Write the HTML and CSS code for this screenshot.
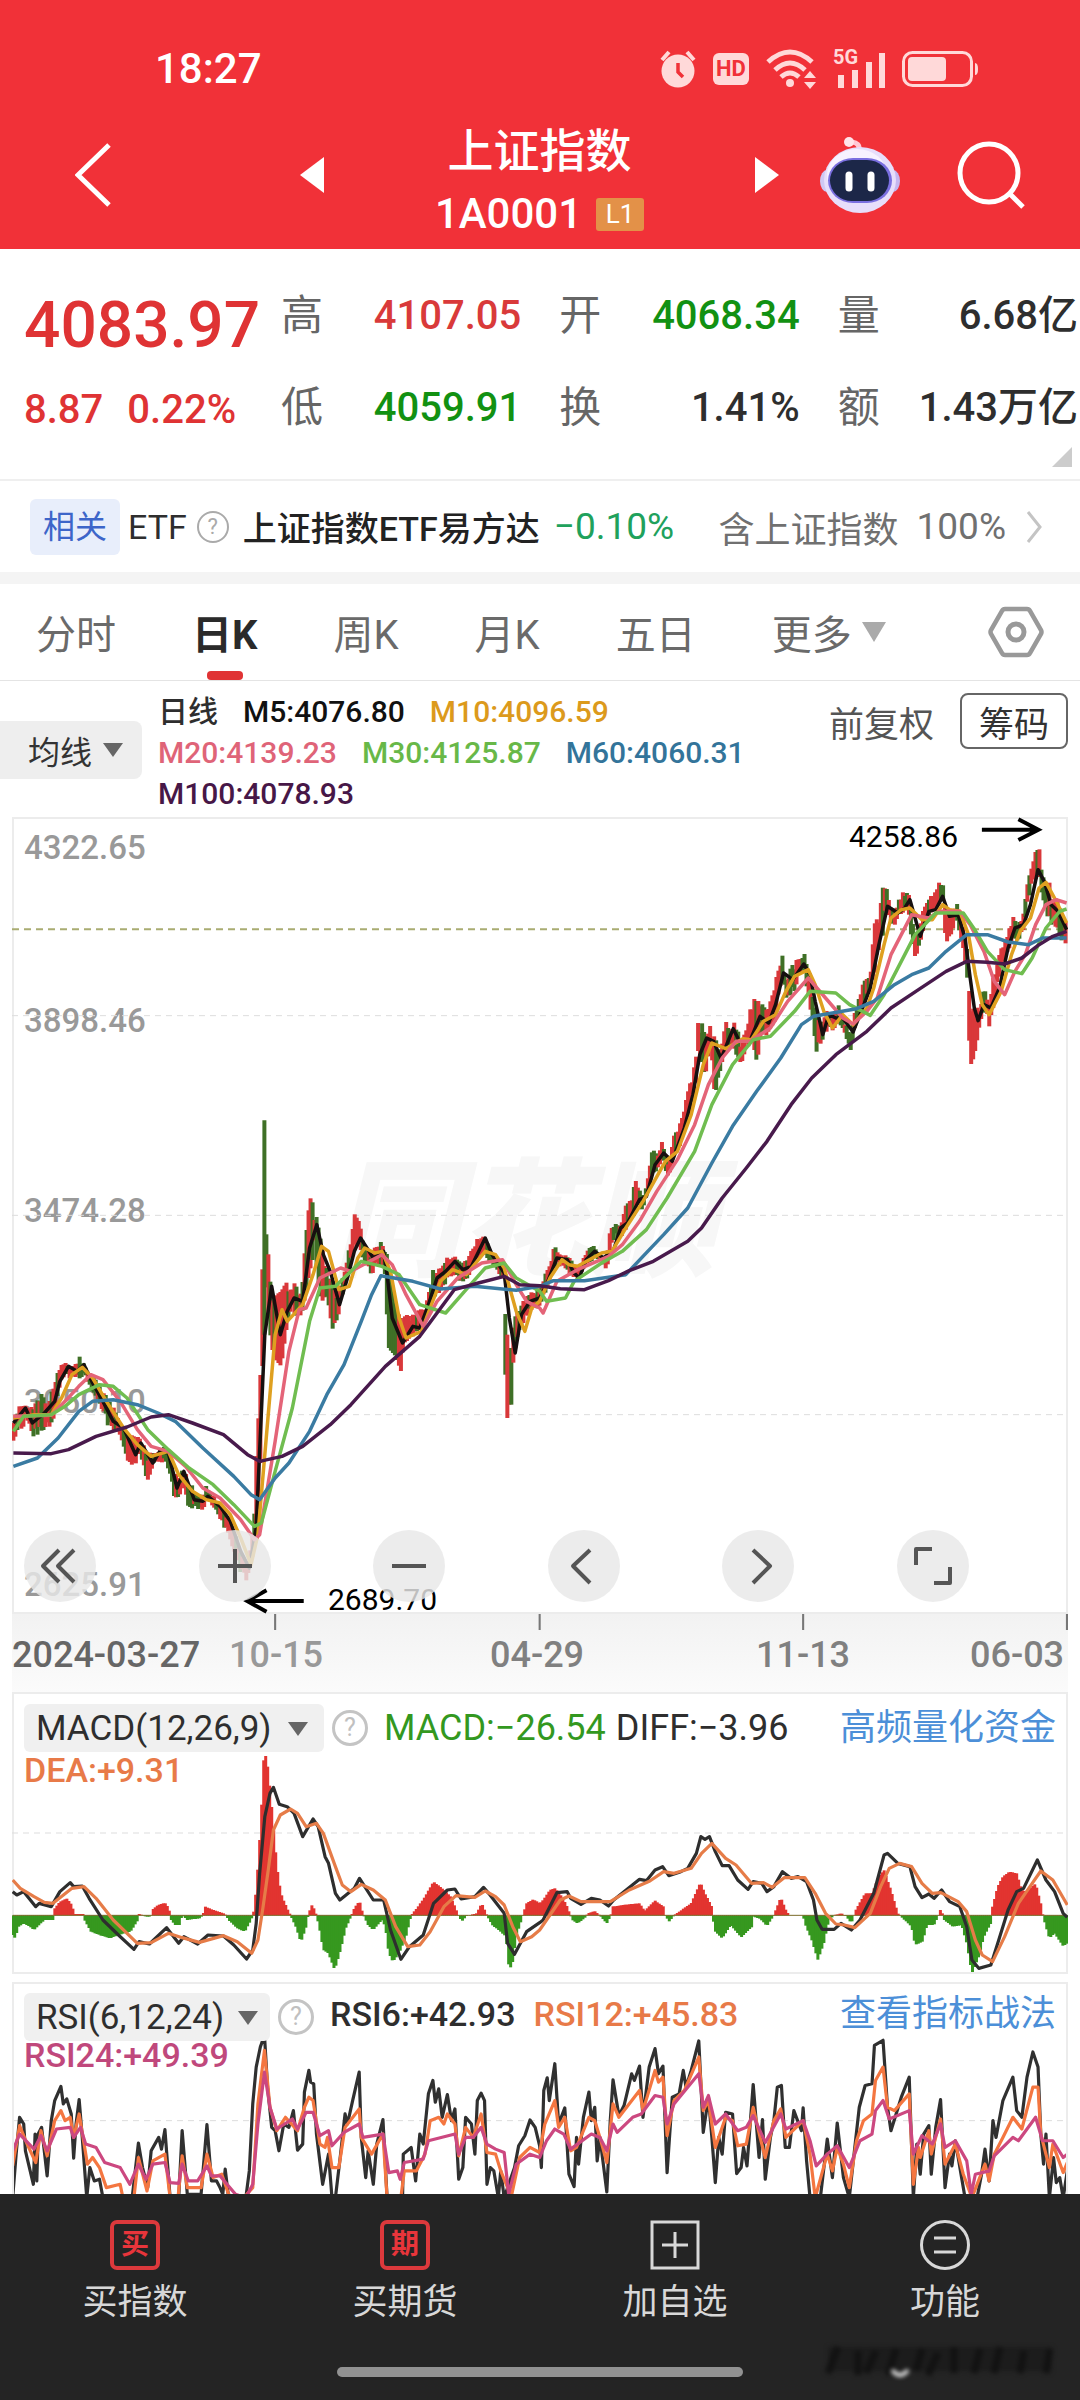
FILE: index.html
```html
<!DOCTYPE html>
<html lang="zh-CN">
<head>
<meta charset="utf-8">
<meta name="viewport" content="width=device-width, initial-scale=1">
<title>上证指数 1A0001</title>
<link rel="stylesheet" href="styles.css">
</head>
<body>
<header class="top">
  <div class="status">
    <span class="clock">18:27</span>
    <div class="status-icons">
      <svg width="36" height="40" viewBox="0 0 36 40"><circle cx="18" cy="22" r="16.500"/><path d="M2 11 9 3M34 11 27 3" class="ln" stroke-width="4"/><path d="M18 14v9l5 5" fill="none" stroke="#f13138" stroke-width="3.500"/></svg>
      <span class="hd">HD</span>
      <svg width="50" height="40" viewBox="0 0 50 40"><g class="ln" stroke-width="5"><path d="M2 13Q24-7 46 13"/><path d="M9 21Q24 7 39 21"/><path d="M15 28Q24 20 33 28"/></g><circle cx="24" cy="34" r="4"/><path d="M44 22l6 7H38zM44 40l6-7H38z"/></svg>
      <span class="net"><small>5G</small><svg width="52" height="40" viewBox="0 0 52 40"><path d="M5 26h6v13H5zM19 21h6v18h-6zM33 13h6v26h-6zM46 4h6v35h-6z"/></svg></span>
      <svg width="76" height="36" viewBox="0 0 76 36"><rect x="1.500" y="1.500" width="68" height="33" rx="9" fill="none" stroke="#ffd9d9" stroke-width="3"/><rect x="6" y="6" width="38" height="24" rx="4"/><path d="M73 12q3 0 3 6t-3 6z"/></svg>
    </div>
  </div>
  <nav class="titlebar">
    <div class="side-left">
      <button aria-label="返回"><svg width="36" height="64" viewBox="0 0 36 64"><path d="M34 2 3 32 34 62" fill="none" stroke="#fff" stroke-width="5"/></svg></button>
      <button aria-label="上一个"><svg width="24" height="36" viewBox="0 0 24 36"><path d="M24 0v36L0 18z" fill="#fff"/></svg></button>
    </div>
    <div class="title">
      <h1>上证指数</h1>
      <p>1A0001<span class="l1">L1</span></p>
    </div>
    <div class="side-right">
      <button aria-label="下一个"><svg width="24" height="36" viewBox="0 0 24 36"><path d="M0 0v36l24-18z" fill="#fff"/></svg></button>
      <button class="robot" aria-label="助手"><svg width="82" height="76" viewBox="0 0 82 76"><path d="M40 13q1-7-7-8" fill="none" stroke="#ffc9d6" stroke-width="5"/><circle cx="30" cy="5" r="5" fill="#ffe4ea"/><ellipse cx="8" cy="44" rx="7" ry="11" fill="#cfc8f4"/><ellipse cx="74" cy="44" rx="7" ry="11" fill="#c4b6f0"/><ellipse cx="41" cy="43" rx="36" ry="33" fill="#e7defb"/><ellipse cx="38" cy="38" rx="30" ry="26" fill="#f7f2ff"/><rect x="9" y="21" width="64" height="45" rx="25" fill="#7a6fe0"/><rect x="11" y="23" width="59" height="41" rx="22" fill="#1c2748"/><path d="M30 38v13M52 38v13" stroke="#fff" stroke-width="7" stroke-linecap="round"/></svg></button>
      <button aria-label="搜索"><svg width="68" height="68" viewBox="0 0 68 68"><circle cx="32" cy="32" r="29" fill="none" stroke="#fff" stroke-width="5"/><path d="M53 53 66 66" stroke="#fff" stroke-width="5"/></svg></button>
    </div>
  </nav>
</header>

<section class="quote">
  <div class="price">
    <strong>4083.97</strong>
    <p><span>8.87</span><span>0.22%</span></p>
  </div>
  <dl class="facts">
    <div><dt>高</dt><dd class="up">4107.05</dd></div>
    <div><dt>开</dt><dd class="down">4068.34</dd></div>
    <div><dt>量</dt><dd>6.68亿</dd></div>
    <div><dt>低</dt><dd class="down">4059.91</dd></div>
    <div><dt>换</dt><dd>1.41%</dd></div>
    <div><dt>额</dt><dd>1.43万亿</dd></div>
  </dl>
  <i class="corner"></i>
</section>

<a class="etf" href="#etf">
  <span class="tag">相关</span><span class="etf-word">ETF</span><span class="help small">?</span>
  <span class="etf-name">上证指数ETF易方达</span><span class="etf-change">−0.10%</span>
  <span class="etf-share">含上证指数</span><span class="etf-pct">100%</span>
  <svg width="16" height="32" viewBox="0 0 16 32"><path d="M2 1 14 16 2 31" fill="none" stroke="#c4c4c4" stroke-width="3"/></svg>
</a>

<nav class="tabs">
  <button>分时</button><button class="on">日K</button><button>周K</button><button>月K</button><button>五日</button><button class="more">更多<i class="caret pale"></i></button>
  <button class="gear" aria-label="设置"><svg width="56" height="52" viewBox="0 0 56 52"><path d="M17 3h22q2 0 3 2l11 19q1 2 0 4L42 47q-1 2-3 2H17q-2 0-3-2L3 28q-1-2 0-4L14 5q1-2 3-2z" fill="none" stroke="#999" stroke-width="4.500"/><circle cx="28" cy="26" r="8" fill="none" stroke="#999" stroke-width="5"/></svg></button>
</nav>

<section class="legend">
  <button class="ma-select">均线<i class="caret"></i></button>
  <p class="ma-values">
    <span>日线</span><span class="m5">M5:4076.80</span><span class="m10">M10:4096.59</span><br>
    <span class="m20">M20:4139.23</span><span class="m30">M30:4125.87</span><span class="m60">M60:4060.31</span><br>
    <span class="m100">M100:4078.93</span>
  </p>
  <button class="adjust">前复权</button>
  <button class="chips">筹码</button>
</section>

<section class="panel kline">
  <span class="mark">同花顺</span>
  <span class="scale s1">4322.65</span><span class="scale s2">3898.46</span><span class="scale s3">3474.28</span><span class="scale s4">3050.10</span><span class="scale s5">2625.91</span>
  <svg class="plot" id="kline" viewBox="36 47 3066 2391" preserveAspectRatio="none">
    <path class="grid" d="M36 643H3102M36 1242H3102M36 1840H3102"/>
    <path class="now" d="M36 384H3102"/>
    <path class="arrow" d="M2852 85H3016M2958 54 3016 85 2958 116M883 2399H719M775 2367 719 2399 775 2431"/>
  </svg>
  <span class="peak">4258.86</span><span class="trough">2689.70</span>
  <div class="controls">
    <button aria-label="最早"><svg viewBox="0 0 72 72"><path d="M35 20 19 36 35 52M50 20 34 36 50 52"/></svg></button>
    <button aria-label="放大"><svg viewBox="0 0 72 72"><path d="M19 36H53M36 19V53"/></svg></button>
    <button aria-label="缩小"><svg viewBox="0 0 72 72"><path d="M19 36H53"/></svg></button>
    <button aria-label="向左"><svg viewBox="0 0 72 72"><path d="M42 20 25 36 42 53"/></svg></button>
    <button aria-label="向右"><svg viewBox="0 0 72 72"><path d="M31 20 48 36 31 53"/></svg></button>
    <button aria-label="全屏"><svg viewBox="0 0 72 72"><path d="M35 19H19V35M53 37V53H37"/></svg></button>
  </div>
</section>
<div class="dates">
  <svg class="ticks" viewBox="36 0 3066 16" preserveAspectRatio="none"><path d="M800 0V16M1568 0V16M2333 0V16M3099 0V16"/></svg>
  <span class="first">2024-03-27</span><span class="faded">10-15</span><span>04-29</span><span>11-13</span><span>06-03</span>
</div>

<section class="panel macd">
  <svg class="plot" id="macd" viewBox="36 6 3066 846" preserveAspectRatio="none"><path class="grid" d="M36 429H3102"/></svg>
  <div class="head">
    <button class="pick">MACD(12,26,9)<i class="caret"></i></button><span class="help">?</span>
    <span class="green">MACD:−26.54</span><span>DIFF:−3.96</span>
    <a href="#flow">高频量化资金</a>
  </div>
  <p class="second orange">DEA:+9.31</p>
</section>

<section class="panel rsi">
  <svg class="plot" id="rsi" viewBox="36 -114 3066 633" preserveAspectRatio="none"><path class="grid" d="M36 300H3102"/></svg>
  <div class="head">
    <button class="pick">RSI(6,12,24)<i class="caret"></i></button><span class="help">?</span>
    <span class="rsi6">RSI6:+42.93</span><span class="orange">RSI12:+45.83</span>
    <a href="#guide">查看指标战法</a>
  </div>
  <p class="second pink">RSI24:+49.39</p>
</section>

<footer class="bottom">
  <nav>
    <button><span class="seal">买</span>买指数</button>
    <button><span class="seal">期</span>买期货</button>
    <button><svg width="50" height="50" viewBox="0 0 50 50"><path d="M2 2H48V48H2zM12 25H38M25 12V38"/></svg>加自选</button>
    <button><svg width="50" height="50" viewBox="0 0 50 50"><circle cx="25" cy="25" r="23.500"/><path d="M14 18H36M14 32H36"/></svg>功能</button>
  </nav>
  <i class="home"></i>
  <svg class="smudge" width="232" height="36" viewBox="0 0 232 36"><rect x="4" y="4" width="224" height="24" fill="#1c1c1c"/><g fill="none" stroke="#121212" stroke-width="7"><path d="M14 4 4 30M34 8V32M52 8 42 30M72 6 64 32M98 6 92 28M114 10 104 32M130 4V30M156 6 150 30M176 4 170 30M200 8 196 30M226 6 222 30"/></g><path d="M68 27q8 10 16 0" fill="none" stroke="#e4e4e4" stroke-width="4"/></svg>
</footer>
<script src="chart.js"></script>
</body>
</html>
```
FILE: styles.css
```css
* { box-sizing: border-box; margin: 0; padding: 0; }
body { background: #fff; color: #2e2e2e; font-family: Roboto, "Noto Sans CJK SC", sans-serif; overflow-x: hidden; }
button { border: 0; background: none; font: inherit; color: inherit; white-space: nowrap; }
a { color: inherit; text-decoration: none; }
svg { display: block; flex: none; }
i { display: block; flex: none; }

.top { background: #f13138; color: #fff; }
.status { display: flex; justify-content: space-between; align-items: center; padding: 44px 102px 0 155px; }
.clock { font-size: 42px; font-weight: 500; line-height: 50px; }
.status-icons { display: flex; align-items: center; gap: 17px; fill: #ffd9d9; color: #ffd9d9; }
.ln { fill: none; stroke: #ffd9d9; }
.hd { background: #ffd9d9; color: #f13138; border-radius: 6px; width: 36px; font: bold 22px/32px Roboto, sans-serif; text-align: center; }
.net { position: relative; }
.net small { position: absolute; left: 0; top: -4px; font: 700 20px/24px Roboto, sans-serif; }
.titlebar { display: flex; height: 155px; padding: 25px 0 8px; }
.titlebar button { display: block; }
.side-left, .side-right { display: flex; align-items: center; height: 112px; }
.side-left { flex: 0 0 324px; justify-content: space-between; padding-left: 75px; }
.side-right { flex: 0 0 325px; gap: 40px; }
.robot { padding-right: 16px; }
.title { flex: 1; text-align: center; }
.title h1 { font-size: 46px; font-weight: 500; line-height: 64px; }
.title p { display: flex; justify-content: center; align-items: center; gap: 14px; font-size: 42px; font-weight: 500; line-height: 62px; }
.l1 { background: #e39148; border-radius: 3px; width: 48px; font-size: 26px; font-weight: 400; line-height: 33px; }

.quote { position: relative; display: flex; height: 232px; padding: 21px 2px 0 24px; border-bottom: 2px solid #efefef; }
.price { flex: 0 0 257px; color: #df3334; font-weight: 500; }
.price strong { display: block; font-size: 64px; font-weight: 500; line-height: 112px; }
.price p { display: flex; gap: 24px; font-size: 40px; line-height: 56px; }
.facts { flex: 1; display: grid; grid-template-columns: repeat(3, 1fr); column-gap: 38px; align-content: start; }
.facts div { display: flex; justify-content: space-between; line-height: 92px; font-size: 40px; white-space: nowrap; }
.facts dt { color: #666; font-size: 42px; }
.facts dd { font-weight: 500; }
.up { color: #d93a3a; }
.down { color: #129112; }
.corner { position: absolute; right: 8px; bottom: 12px; border-left: 20px solid transparent; border-bottom: 20px solid #ccc; }

.etf { display: flex; align-items: center; height: 91px; padding: 0 38px 0 30px; font-size: 34px; white-space: nowrap; }
.tag { background: #e8eefb; color: #3d65c9; border-radius: 6px; width: 90px; line-height: 56px; text-align: center; font-size: 32px; margin-right: 8px; }
.help { flex: none; width: 36px; height: 36px; border: 3px solid #c4c4c4; border-radius: 50%; color: #c0c0c0; text-align: center; font-size: 25px; line-height: 30px; }
.help.small { width: 32px; height: 32px; border: 2px solid #aaa; color: #aaa; font-size: 22px; line-height: 28px; margin: 0 14px 0 10px; }
.etf-name { color: #222; font-weight: 500; }
.etf-change { color: #20a15c; font-size: 37px; margin-left: 14px; }
.etf-share { color: #707070; font-size: 36px; margin-left: auto; }
.etf-pct { color: #707070; font-size: 37px; margin: 0 20px 0 18px; }

.tabs { display: flex; align-items: center; gap: 76px; height: 109px; padding: 0 36px; border-top: 12px solid #f4f4f4; border-bottom: 1px solid #e4e4e4; font-size: 40px; color: #6a6a6a; }
.tabs button { height: 96px; }
.tabs .on { position: relative; color: #2a2a2a; font-weight: 700; }
.tabs .on::after { content: ""; position: absolute; left: 50%; bottom: 0; margin-left: -18px; width: 36px; height: 9px; border-radius: 4px; background: #e03334; }
.more { display: flex; align-items: center; gap: 10px; }
.tabs .gear { margin-left: auto; }
.caret { border: 10px solid transparent; border-top: 14px solid #666; border-bottom: 0; }
.caret.pale { border-width: 20px 12px 0; border-top-color: #aaa; }

.legend { display: flex; align-items: flex-start; padding: 10px 12px 0 0; height: 136px; }
.ma-select { display: flex; align-items: center; gap: 11px; width: 142px; height: 58px; margin-top: 30px; padding-left: 28px; background: #eee; border-radius: 0 8px 8px 0; font-size: 32px; color: #333; }
.ma-values { flex: 1; padding-left: 16px; font-size: 30px; font-weight: 500; line-height: 41px; white-space: nowrap; }
.ma-values span { margin-right: 25px; }
.m5 { color: #111; } .m10 { color: #dc9a1c; } .m20 { color: #df6478; } .m30 { color: #68b848; } .m60 { color: #33749a; } .m100 { color: #471747; }
.adjust { font-size: 35px; line-height: 70px; color: #555; margin-right: 26px; }
.chips { width: 108px; height: 56px; margin-top: 2px; border: 2px solid #666; border-radius: 8px; font-size: 35px; color: #333; }

.panel { position: relative; margin: 0 12px; border: 2px solid #ececec; }
.plot { position: absolute; inset: -2px; width: calc(100% + 4px); height: calc(100% + 4px); fill: none; }
.plot path { vector-effect: non-scaling-stroke; }
.plot .grid { stroke: #ddd; stroke-width: 1px; stroke-dasharray: 6px 5px; }
.plot .now { stroke: #a9ac72; stroke-width: 2px; stroke-dasharray: 7px 5px; }
.plot .arrow { stroke: #000; stroke-width: 4px; }
.plot .line { stroke-width: 3px; stroke-linejoin: round; }
.kline { height: 797px; }
.mark { position: absolute; left: 50%; top: 312px; margin-left: -208px; font: italic 900 128px/160px "Noto Sans CJK SC", sans-serif; color: #f7f7f7; white-space: nowrap; }
.scale { position: absolute; left: 10px; font-size: 33px; font-weight: 500; line-height: 40px; color: #999; }
.s1 { top: 9px; } .s2 { top: 182px; } .s3 { top: 372px; } .s4 { top: 563px; } .s5 { top: 746px; }
.peak, .trough { position: absolute; font-size: 30px; line-height: 36px; color: #000; }
.peak { right: 108px; top: 0; }
.trough { left: 314px; bottom: -6px; }
.controls { position: absolute; left: 10px; right: 97px; bottom: 10px; display: flex; justify-content: space-between; }
.controls button { width: 72px; height: 72px; border-radius: 50%; background: rgba(232, 232, 232, 0.82); }
.controls svg { fill: none; stroke: #555; stroke-width: 4px; stroke-linejoin: round; }

.dates { position: relative; margin: 0 12px; height: 78px; display: grid; grid-template-columns: 217fr 261fr 266fr 214fr 98fr; background: linear-gradient(#f2f2f2, #fbfbfb); font-size: 36px; font-weight: 500; line-height: 82px; color: #808080; white-space: nowrap; }
.first { color: #666; }
.faded { color: #999; }
.ticks { position: absolute; left: 0; top: 0; width: 100%; height: 16px; stroke: #777; stroke-width: 6px; }

.macd { height: 282px; margin-bottom: 8px; }
.rsi { height: 212px; border-bottom: 0; overflow: hidden; }
.rsi .plot { top: -2px; height: calc(100% + 2px); }
.head { position: relative; display: flex; align-items: center; padding: 9px 10px 0; font-size: 36px; line-height: 50px; white-space: nowrap; }
.pick { display: flex; align-items: center; justify-content: space-between; width: 300px; height: 48px; padding: 2px 16px 0 12px; border-radius: 6px; background: #f0f0f0; font-size: 35px; }
.head .help { margin: 0 16px 0 8px; line-height: 30px; }
.head span + span { margin-right: 10px; }
.head a { margin-left: auto; color: #4c8fd8; }
.rsi .pick { width: 246px; padding-right: 12px; }
.rsi .head { align-items: flex-start; font-size: 34px; font-weight: 500; line-height: 42px; }
.rsi .pick, .rsi .head a, .rsi .help { font-weight: 400; }
.rsi .head .help { margin-top: 6px; }
.rsi .head .rsi6 { margin-right: 18px; }
.rsi .head a { font-size: 36px; }
.second { position: relative; padding-left: 10px; font-size: 34px; font-weight: 500; line-height: 34px; }
.rsi .second { line-height: 28px; }
.green { color: #33981f; } .orange { color: #e87a48; } .pink { color: #c0487c; }

.bottom { position: relative; background: #242424; color: #d8d8d8; padding-bottom: 24px; }
.bottom nav { display: grid; grid-template-columns: repeat(4, 1fr); height: 173px; padding-top: 26px; }
.bottom button { display: flex; flex-direction: column; align-items: center; gap: 8px; font-size: 35px; line-height: 50px; }
.bottom nav svg { fill: none; stroke: #d8d8d8; stroke-width: 3px; }
.seal { width: 50px; height: 50px; border: 4px solid #dc393c; border-radius: 7px; color: #e8353b; font-size: 28px; font-weight: 700; line-height: 42px; text-align: center; }
.home { width: 406px; height: 10px; margin: 0 auto; border-radius: 5px; background: #929292; }
.smudge { position: absolute; right: 24px; bottom: 22px; filter: blur(2px); }
```
FILE: chart.js
```js
// Plot coordinates: the right half of every series starts again at x = 0.
const HALF = 1568, LEFT = 38, RIGHT = 3100, STEP = 5.83;
const NS = "http://www.w3.org/2000/svg";

function rows(left, right) {
  const read = (text, dx) => text.trim().split(/\s+/).map(p => {
    const n = p.split(",").map(Number);
    n[0] += dx;
    return n;
  });
  return read(left, 0).concat(read(right, HALF));
}

function add(plot, d, color, width, before) {
  const path = document.createElementNS(NS, "path");
  path.setAttribute("d", d);
  path.setAttribute("stroke", color);
  path.setAttribute("class", "line");
  path.style.strokeWidth = width + "px";
  const svg = document.getElementById(plot);
  svg.insertBefore(path, before ? svg.querySelector(".arrow") : null);
}

function line(plot, color, left, right) {
  add(plot, "M" + rows(left, right).map(p => p[0] + " " + p[1]).join("L"), color, plot === "kline" ? 3.5 : 3.2);
}

function at(points, x, k) {
  let i = 1;
  while (i < points.length - 1 && points[i][0] < x) i++;
  const a = points[i - 1], b = points[i];
  const t = Math.max(0, Math.min(1, (x - a[0]) / (b[0] - a[0])));
  return a[k] + (b[k] - a[k]) * t;
}

let seed = 11;
function rand() {
  seed = (seed * 1103515245 + 12345) % 2147483648;
  return seed / 2147483648;
}

// x, high, low
const range = rows(`38,1855,1930 60,1790,1890 80,1810,1860 100,1810,1915 120,1765,1890 140,1800,1885 160,1740,1850 170,1700,1770 190,1680,1730 210,1690,1735 230,1663,1745 245,1680,1720 260,1710,1760 290,1745,1810 320,1790,1890 345,1850,1900 360,1880,1940 375,1900,2005 395,1900,1990 405,1900,1960 430,1950,2045 450,1950,1980 480,1930,1985 495,1950,2040 505,1990,2090 520,2040,2100 530,1980,2070 550,2040,2125 590,2085,2135 600,2045,2095 625,2080,2130 650,2115,2180 670,2150,2225 700,2240,2320 718,2280,2345 730,2240,2300 740,2100,2220 748,1900,2180 756,1780,2040 763,1400,1690 767,1390,1690 768,957,1600 773,957,1600 774,1293,1450 782,1375,1560 790,1500,1640 805,1480,1680 818,1470,1695 832,1443,1590 845,1460,1530 857,1430,1540 875,1480,1555 885,1360,1500 895,1240,1440 903,1190,1400 915,1218,1350 930,1300,1480 943,1380,1510 955,1400,1520 965,1430,1580 978,1490,1590 990,1440,1510 1005,1380,1450 1018,1315,1400 1031,1210,1340 1043,1255,1340 1060,1330,1400 1080,1350,1420 1105,1320,1390 1120,1325,1460 1130,1400,1640 1150,1520,1665 1165,1550,1710 1185,1540,1620 1210,1525,1610 1235,1520,1570 1245,1450,1550 1260,1400,1500 1280,1395,1470 1300,1365,1440 1320,1355,1420 1340,1390,1450 1365,1360,1430 1385,1300,1400 1400,1290,1380 1410,1310,1370 1430,1350,1400 1450,1380,1420 1467,1410,1450 1469,1600,1850 1475,1600,1850 1479,1640,1810 1488,1640,1810 1490,1560,1700 1515,1500,1580 1540,1470,1530 1568,1460,1520`,
`15,1405,1480 30,1385,1440 43,1320,1400 60,1360,1395 85,1355,1420 110,1400,1435 130,1360,1400 153,1327,1380 175,1355,1375 195,1370,1415 205,1265,1350 220,1257,1310 235,1270,1310 250,1210,1290 270,1170,1260 281,1125,1210 300,1190,1230 315,1115,1170 327,1045,1130 345,1055,1100 357,1010,1080 372,1080,1140 385,1010,1090 400,980,1060 420,915,1000 435,850,950 448,790,900 456,740,860 459,658,780 472,660,800 482,690,830 495,662,760 508,710,875 520,730,850 532,700,790 543,652,740 555,690,740 565,640,760 583,710,815 600,670,750 618,588,720 630,600,780 647,597,710 655,620,710 680,570,690 692,490,600 705,462,550 715,520,590 730,490,600 750,465,540 768,450,520 780,500,600 795,570,680 804,620,757 820,650,720 835,620,690 850,640,695 870,600,670 885,660,700 902,680,757 915,620,700 930,570,640 945,525,600 960,510,570 970,375,530 985,330,450 997,255,400 1007,228,330 1018,305,370 1030,320,385 1050,275,340 1068,258,320 1080,310,430 1088,370,495 1100,380,460 1115,320,400 1127,300,360 1145,262,330 1160,235,320 1170,220,300 1178,310,420 1192,320,425 1210,300,350 1225,330,430 1235,380,490 1245,430,560 1248,630,788 1254,630,788 1260,620,770 1275,600,710 1292,560,620 1306,590,680 1318,500,620 1335,455,540 1350,410,480 1365,370,450 1378,338,410 1390,370,420 1403,330,410 1415,250,320 1430,175,240 1443,138,240 1452,138,240 1460,220,300 1478,217,370 1485,290,400 1500,280,390 1515,320,420 1532,350,450`);

// Candles: one short bar per trading day, green on falling stretches.
for (let x = LEFT + 2; x < RIGHT; x += STEP) {
  const top = at(range, x, 1), low = at(range, x, 2), h = low - top;
  const falling = at(range, x + 6, 1) > at(range, x - 6, 1);
  const spike = h > 140;
  const a = top + (spike ? 0 : rand() * h * 0.3), b = low - (spike ? 0 : rand() * h * 0.3);
  const green = rand() < (falling ? 0.55 : 0.2) || (x > 766 && x < 774);
  add("kline", `M${x.toFixed(1)} ${a.toFixed(0)}V${b.toFixed(0)}`, green ? "#3f7026" : "#d9383a", 4, true);
}

line("kline", "#161010",
"40,1865 75,1820 95,1865 130,1835 160,1800 175,1740 200,1695 225,1710 245,1690 270,1745 300,1800 330,1860 360,1880 395,1960 410,1925 445,1985 465,1950 490,1955 515,2060 535,2010 565,2095 590,2100 605,2085 640,2115 670,2160 700,2250 725,2300 745,2180 755,1950 770,1600 790,1455 815,1600 835,1530 855,1490 880,1500 900,1340 921,1270 940,1360 960,1410 987,1510 1010,1430 1030,1350 1048,1310 1085,1370 1115,1350 1125,1420 1140,1550 1170,1625 1200,1575 1220,1580 1245,1510 1270,1430 1295,1410 1322,1380 1345,1405 1370,1395 1410,1310 1430,1360 1465,1415 1480,1550 1497,1655 1515,1540 1540,1500 1568,1490",
"20,1450 50,1370 80,1375 100,1415 115,1430 135,1375 160,1350 185,1370 215,1345 235,1280 255,1265 290,1195 310,1185 335,1090 360,1055 385,1080 420,980 445,880 465,760 485,710 505,720 527,772 545,725 562,682 580,720 610,720 640,645 665,665 685,610 708,515 735,535 767,488 785,520 800,600 822,700 840,640 860,650 880,650 910,692 930,640 960,560 985,430 1010,315 1040,335 1060,320 1075,295 1105,405 1130,330 1150,325 1170,285 1190,345 1215,340 1235,410 1250,530 1262,620 1273,658 1290,610 1310,620 1335,560 1360,440 1380,380 1405,370 1425,310 1447,205 1465,240 1485,310 1505,330 1530,385");
line("kline", "#dfa020",
"40,1850 100,1840 150,1840 180,1790 210,1720 240,1698 270,1730 310,1800 360,1880 400,1930 440,1965 490,1950 520,2020 560,2070 600,2095 640,2105 670,2140 700,2210 730,2290 750,2200 775,1900 800,1600 820,1525 835,1560 880,1510 910,1420 935,1335 955,1350 985,1465 1015,1455 1040,1370 1060,1340 1090,1355 1110,1350 1135,1410 1160,1550 1180,1610 1225,1590 1250,1520 1280,1440 1315,1405 1355,1420 1410,1350 1440,1360 1465,1400 1500,1530 1525,1590 1545,1520 1568,1500",
"30,1430 65,1375 85,1390 110,1395 180,1355 210,1350 250,1280 300,1200 365,1080 400,1050 440,940 475,790 500,725 540,742 590,712 615,715 650,660 685,640 715,570 740,525 780,505 800,550 825,630 850,680 880,640 910,670 950,620 970,560 1000,430 1020,350 1050,325 1075,320 1110,355 1140,355 1170,310 1190,325 1220,330 1245,400 1265,520 1285,610 1305,640 1340,570 1370,460 1395,390 1425,350 1450,260 1470,243 1500,300 1530,365");
line("kline", "#e46478",
"40,1845 150,1842 190,1800 230,1755 265,1720 300,1735 350,1800 400,1885 440,1935 490,1950 540,1995 590,2060 640,2090 700,2155 740,2215 755,2200 800,1920 840,1650 870,1525 890,1520 930,1430 990,1400 1020,1410 1110,1360 1140,1390 1180,1480 1230,1575 1270,1500 1330,1430 1400,1385 1460,1375 1500,1450 1530,1500 1568,1520",
"10,1535 50,1440 110,1405 200,1365 240,1330 290,1260 340,1170 400,1075 450,970 490,850 530,770 570,720 610,720 670,680 720,600 780,530 830,590 880,650 910,668 950,630 980,590 1020,460 1080,340 1130,350 1160,330 1220,330 1250,370 1290,450 1320,540 1350,580 1380,510 1410,460 1440,370 1470,310 1500,295 1530,305");
line("kline", "#70bd50",
"40,1890 70,1845 150,1840 190,1815 230,1780 290,1750 330,1755 370,1790 430,1885 490,1945 550,2000 620,2050 680,2110 740,2175 760,2165 800,2010 850,1820 900,1560 930,1460 975,1455 1050,1380 1110,1395 1160,1420 1220,1510 1295,1535 1350,1470 1410,1400 1465,1385 1500,1430 1568,1470",
"20,1500 75,1490 100,1440 180,1385 240,1350 310,1285 370,1190 450,1050 500,910 560,790 620,715 670,705 740,630 785,570 860,575 900,610 960,642 1000,580 1050,480 1090,400 1150,335 1230,335 1260,380 1300,450 1350,505 1400,517 1430,470 1470,380 1510,330 1530,323");
line("kline", "#3a7ba2",
"40,1995 110,1970 170,1910 230,1830 270,1800 330,1795 400,1810 460,1835 510,1860 590,1940 680,2025 730,2080 755,2095 800,2030 840,1985 900,1890 950,1780 1000,1690 1050,1560 1080,1480 1107,1423 1200,1440 1280,1463 1380,1455 1500,1467 1568,1455",
"40,1438 130,1438 250,1420 300,1365 360,1300 430,1220 500,1085 560,975 630,870 700,770 760,670 795,645 850,635 920,622 970,600 1030,550 1080,520 1130,500 1180,450 1240,400 1300,400 1360,422 1420,430 1460,410 1530,410");
line("kline", "#481a4c",
"40,1955 150,1957 200,1945 280,1905 370,1877 440,1847 490,1840 560,1865 650,1900 720,1960 755,1980 820,1965 880,1935 960,1870 1020,1810 1120,1695 1220,1605 1320,1465 1390,1445 1465,1425 1510,1450 1568,1453",
"60,1462 130,1465 200,1438 260,1408 330,1380 430,1320 470,1280 530,1190 600,1100 660,1020 730,910 790,830 860,760 950,690 1020,620 1100,565 1180,510 1240,480 1300,483 1350,488 1400,470 1450,430 1490,405 1530,390");

// MACD histogram around the zero line.
const ZERO = 676;
const hist = rows("38,735 45,745 55,710 70,700 85,708 100,720 115,705 130,690 155,690 157,660 175,635 195,625 210,645 217,672 245,672 247,690 265,725 290,735 320,745 345,735 380,725 402,690 405,672 425,680 440,680 442,660 460,645 480,638 492,655 495,685 510,705 522,705 530,675 545,690 580,685 590,676 597,650 620,660 655,672 665,690 690,715 712,725 730,690 737,670 745,600 752,500 760,370 765,230 768,198 773,198 780,240 790,350 800,470 810,570 820,620 835,655 845,676 860,710 875,757 890,710 897,670 908,643 920,676 928,710 940,780 955,790 973,840 990,780 1005,715 1020,680 1030,655 1045,632 1055,672 1070,705 1085,720 1110,690 1120,710 1130,790 1142,815 1160,790 1180,740 1195,676 1215,650 1235,620 1260,575 1285,595 1310,620 1330,670 1342,695 1355,678 1385,670 1400,640 1415,676 1430,705 1455,725 1470,740 1480,843 1490,815 1500,740 1518,680 1530,640 1550,628 1568,640",
"10,630 30,600 45,595 65,620 80,650 88,672 95,690 110,700 130,685 140,670 160,663 175,676 195,700 207,676 210,650 240,645 290,640 305,662 335,632 360,650 365,678 377,695 390,676 415,658 440,640 467,577 480,610 500,650 502,680 510,725 530,745 555,705 585,742 617,710 620,680 640,686 660,708 680,676 700,622 715,660 725,676 765,676 770,700 790,750 808,810 825,760 840,690 855,676 875,670 890,678 905,700 918,660 945,610 965,610 985,560 1000,540 1020,600 1040,670 1060,690 1080,710 1090,765 1112,755 1125,705 1145,705 1158,676 1165,655 1175,690 1200,710 1225,705 1240,760 1255,850 1275,800 1290,740 1310,700 1315,650 1330,590 1345,560 1365,545 1385,550 1400,600 1415,605 1440,580 1455,640 1462,680 1480,745 1495,730 1520,768 1532,760");
for (let x = LEFT; x < RIGHT; x += STEP) {
  const y = at(hist, x, 1);
  add("macd", `M${x.toFixed(1)} ${ZERO}V${y.toFixed(0)}`, y < ZERO ? "#e23430" : "#36981f", 3);
}
add("macd", `M${LEFT} ${ZERO}H${RIGHT}`, "#7a6a28", 1);
line("macd", "#2e2e2e",
"38,605 50,615 70,605 105,650 115,640 150,650 175,605 205,578 215,590 240,588 260,625 300,690 345,735 390,778 405,755 435,762 485,713 520,760 535,740 575,762 605,735 650,738 680,765 717,807 735,780 745,700 755,550 770,380 785,310 795,292 812,343 835,350 855,370 880,440 910,387 925,410 945,500 955,520 975,610 988,630 1030,595 1045,565 1085,630 1115,630 1135,720 1165,808 1190,770 1230,735 1260,640 1300,600 1322,597 1340,627 1380,620 1405,592 1420,610 1465,670 1475,760 1495,793 1530,725 1568,698",
"10,690 50,608 80,605 90,625 120,643 150,625 175,630 200,648 215,630 290,568 310,572 335,540 357,530 375,557 410,545 430,535 455,490 468,440 480,448 493,440 510,485 530,527 550,527 575,570 605,598 620,575 645,580 660,605 680,590 705,545 730,565 750,560 775,575 795,630 805,690 820,718 855,718 875,700 905,720 930,690 970,610 1000,495 1010,490 1040,520 1075,530 1090,590 1110,623 1130,612 1145,625 1167,600 1190,635 1220,650 1240,710 1255,810 1275,835 1310,825 1330,760 1360,660 1385,605 1405,595 1445,510 1470,570 1495,605 1520,670 1532,682");
line("macd", "#e67c48",
"38,570 60,595 100,620 130,637 155,640 210,595 245,590 280,625 330,690 400,760 440,758 490,730 530,743 580,757 650,737 690,755 732,790 750,750 765,650 780,540 795,420 815,375 845,357 865,370 890,410 920,400 940,430 975,530 995,585 1020,605 1050,583 1085,600 1120,630 1150,710 1185,770 1220,765 1250,725 1290,650 1325,617 1380,622 1410,603 1440,620 1465,645 1490,710 1512,755 1545,740 1568,720",
"30,675 60,630 85,618 120,635 205,635 260,600 320,573 360,545 390,550 440,535 470,490 500,460 540,505 570,525 615,580 650,578 675,592 710,563 770,563 800,610 830,670 860,702 885,705 915,713 960,670 990,590 1015,535 1045,520 1080,530 1110,580 1140,610 1165,608 1215,635 1240,665 1265,750 1285,795 1315,815 1350,740 1390,640 1430,580 1455,543 1490,570 1532,645");

line("rsi", "#303030",
"38,530 48,400 58,290 70,310 75,390 98,490 103,340 108,480 112,340 122,320 138,465 150,300 160,240 178,198 185,250 195,235 208,280 215,412 222,310 231,237 240,350 253,530 262,440 275,480 290,475 300,530 385,530 403,367 415,440 430,500 440,390 462,350 470,385 480,327 495,530 520,530 530,330 545,520 585,520 602,312 615,480 630,480 640,500 648,520 655,445 665,530 715,530 725,450 735,250 745,140 757,80 769,45 778,200 790,320 800,330 811,390 825,310 840,320 853,270 865,388 880,370 885,215 898,150 903,185 912,190 920,340 938,490 955,400 965,530 975,530 990,400 1003,280 1010,310 1025,240 1044,155 1050,350 1063,470 1070,390 1085,490 1095,370 1113,297 1125,530 1170,530 1172,400 1195,380 1208,480 1220,340 1230,370 1245,220 1258,180 1265,245 1275,205 1285,290 1300,222 1312,300 1322,265 1333,475 1345,440 1353,290 1370,310 1380,400 1387,240 1398,218 1408,240 1415,490 1425,440 1435,450 1448,530 1455,450 1465,530 1495,440 1507,375 1525,345 1540,298 1555,320 1568,375",
"5,440 12,210 22,172 28,240 44,130 55,310 73,262 85,460 100,497 107,350 113,430 127,290 143,215 150,300 160,260 167,420 175,350 195,513 205,300 213,178 230,285 245,255 267,160 275,180 290,137 300,290 318,140 335,85 345,160 358,137 370,455 385,230 405,220 417,150 425,200 440,150 462,62 475,335 490,230 500,350 510,485 520,350 530,400 540,275 560,280 572,458 585,440 592,380 602,435 620,192 637,410 647,297 655,475 670,350 680,300 690,200 702,195 713,380 725,380 738,270 760,330 765,262 775,420 785,530 815,530 835,355 850,470 864,307 882,470 899,530 915,380 928,260 945,195 965,190 972,75 997,60 1010,260 1020,330 1050,230 1073,170 1085,530 1095,370 1105,460 1115,340 1130,315 1137,460 1150,320 1164,237 1177,500 1190,400 1197,435 1207,360 1225,470 1235,530 1270,530 1283,460 1293,385 1305,480 1316,300 1325,350 1345,240 1374,170 1385,270 1400,290 1415,170 1432,95 1447,140 1455,340 1463,430 1470,340 1480,530 1492,410 1500,485 1510,470 1520,530 1532,450");
line("rsi", "#f47640",
"38,435 58,315 80,370 105,425 120,330 138,405 160,300 178,270 190,300 205,290 215,350 231,280 255,430 270,410 290,440 310,500 350,490 358,530 390,530 403,410 428,510 445,420 480,400 495,530 518,530 530,405 545,500 585,500 602,400 620,470 645,460 665,520 700,540 735,500 750,250 769,90 785,260 805,330 830,290 865,330 885,260 898,230 910,240 930,370 945,380 952,350 965,440 985,440 1003,320 1044,265 1050,350 1080,400 1113,340 1125,530 1165,530 1175,450 1210,450 1235,400 1250,300 1275,290 1290,310 1300,280 1322,310 1333,405 1353,320 1375,350 1398,280 1415,395 1440,400 1455,450 1475,500 1485,530 1510,410 1540,380 1568,395",
"15,310 44,240 55,320 73,290 90,390 107,380 143,290 160,300 175,350 195,425 213,250 230,290 290,210 300,270 335,150 345,185 358,170 370,345 390,240 420,210 462,110 475,270 490,240 510,380 540,290 560,300 575,375 600,370 620,260 640,350 655,410 680,300 700,265 715,350 765,300 785,400 800,530 835,400 850,450 864,380 882,430 899,500 920,360 940,300 965,280 975,180 997,140 1010,260 1030,270 1073,220 1085,490 1100,380 1105,410 1130,330 1137,400 1164,295 1177,430 1207,370 1230,460 1255,530 1293,430 1305,480 1320,400 1345,350 1374,290 1400,325 1432,200 1447,200 1455,340 1480,440 1490,370 1520,455 1532,425");
line("rsi", "#cc4880",
"38,390 58,340 100,385 120,345 138,390 165,325 205,320 215,350 235,320 250,370 280,380 305,425 350,440 378,490 403,430 425,475 445,430 480,425 495,485 520,487 530,430 548,480 575,480 602,435 615,465 640,465 685,520 715,530 735,490 750,310 769,155 785,260 805,325 850,295 865,325 890,275 910,275 930,345 955,330 965,375 1000,335 1044,310 1055,350 1113,340 1130,455 1155,450 1163,475 1175,425 1230,415 1245,360 1322,340 1333,400 1353,350 1375,350 1398,320 1415,370 1440,385 1465,395 1478,520 1500,430 1540,400 1568,410",
"20,360 44,325 70,340 90,385 150,340 175,350 195,390 213,310 225,335 270,290 295,280 335,225 358,230 370,310 390,250 462,160 475,260 490,225 510,310 540,280 575,330 600,320 620,285 655,365 700,280 715,325 765,300 785,360 803,435 835,400 864,375 899,440 930,360 965,340 975,270 997,240 1015,295 1073,270 1085,400 1110,345 1140,370 1164,310 1177,380 1207,360 1240,420 1253,520 1265,460 1305,450 1320,405 1374,350 1390,360 1440,290 1460,360 1490,360 1520,410 1532,400");
```
